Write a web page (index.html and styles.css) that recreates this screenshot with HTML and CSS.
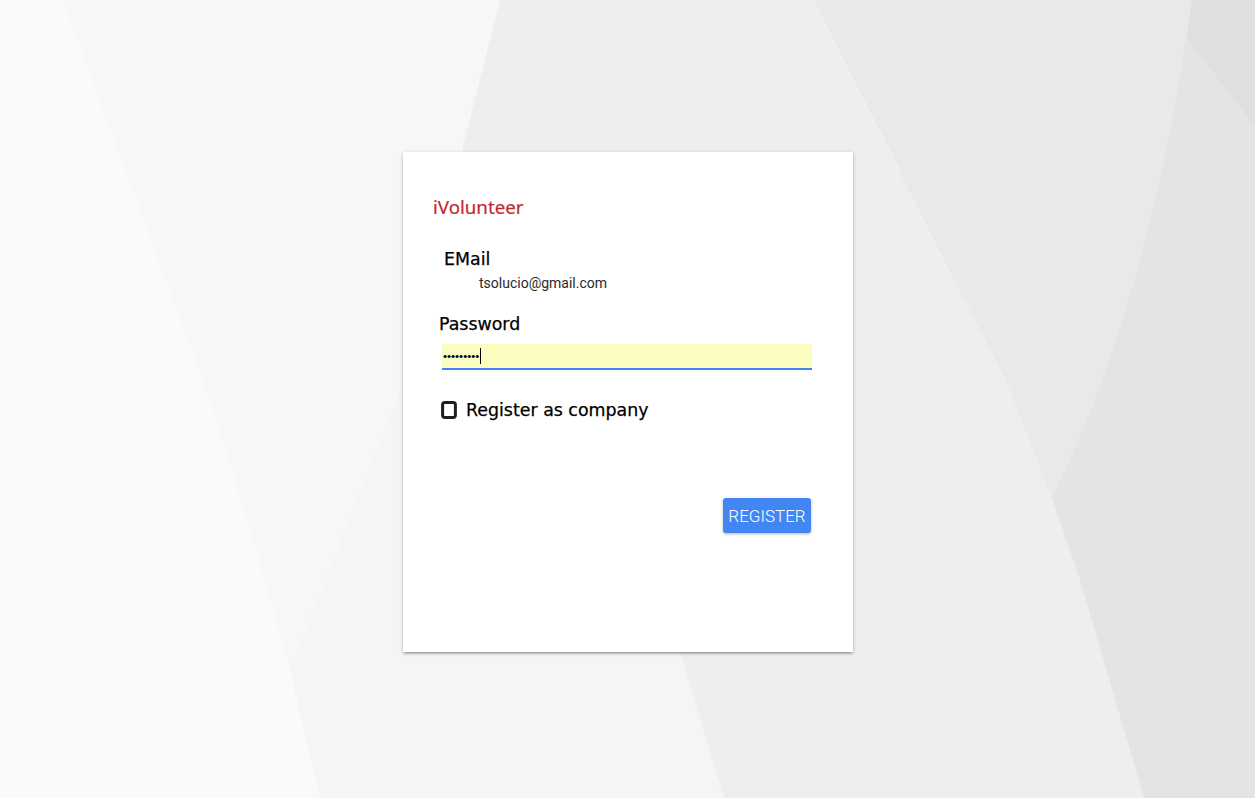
FILE: index.html
```html
<!DOCTYPE html>
<html lang="en">
<head>
<meta charset="utf-8">
<title>iVolunteer - Register</title>
<link rel="stylesheet" href="styles.css">
</head>
<body>
<svg class="backdrop" width="1255" height="798" viewBox="0 0 1255 798" preserveAspectRatio="none" aria-hidden="true">
  <rect x="0" y="0" width="1255" height="798" fill="#fafafa"/>
  <path d="M63 0 Q140 210 210 400 Q255 540 290 670 L320 798 L724 798 L680 652 Q600 420 500 0 Z" fill="#f5f5f5"/>
  <path d="M63 0 L500 0 Q470 180 403 385 L290 670 Q255 540 210 400 Q140 210 63 0 Z" fill="#f7f7f7"/>
  <rect x="900" y="0" width="355" height="798" fill="#e4e4e4"/>
  <path d="M1192 0 L1255 0 L1255 126 L1186 37 Z" fill="#dfdfdf"/>
  <path d="M800 0 L1192 0 Q1150 300 1052 498 L1006 380 L813 0 Z" fill="#e9e9e9"/>
  <path d="M500 0 L813 0 L920 212 L1006 380 L1052 498 L1080 580 L1144 798 L724 798 L680 652 Q560 380 462 150 Z" fill="#eeeeed"/>
</svg>

<main class="page">
  <section class="card">
    <h1 class="brand">iVolunteer</h1>

    <div class="field field-email">
      <div class="label">EMail</div>
      <div class="value">tsolucio@gmail.com</div>
    </div>

    <div class="field field-password">
      <div class="label">Password</div>
      <div class="input"><span class="dots">•••••••••</span><span class="caret"></span></div>
    </div>

    <label class="check-row">
      <svg class="check-icon" width="16" height="18" viewBox="0 0 16 18" aria-hidden="true">
        <rect x="1.6" y="1.6" width="12.8" height="14.8" rx="2.2" ry="2.2" fill="none" stroke="#1e1e1e" stroke-width="3"/>
      </svg>
      <span class="check-text">Register as company</span>
    </label>

    <div class="actions">
      <button class="btn" type="button">REGISTER</button>
    </div>
  </section>
</main>
</body>
</html>
```

FILE: styles.css
```css
html, body {
  margin: 0;
  padding: 0;
  width: 1255px;
  height: 798px;
  overflow: hidden;
  background: #fafafa;
}

.backdrop {
  position: absolute;
  left: 0;
  top: 0;
  z-index: 0;
}

.page {
  position: relative;
  z-index: 1;
  padding: 152px 0 0 403px;
}

.card {
  box-sizing: border-box;
  width: 450px;
  height: 500px;
  background: #ffffff;
  padding: 43px 42px 0 30px;
  box-shadow: 0 2px 2px 0 rgba(0,0,0,0.14), 0 3px 1px -2px rgba(0,0,0,0.12), 0 1px 4px 0 rgba(0,0,0,0.2);
  display: flex;
  flex-direction: column;
}

.brand {
  margin: 0;
  font-family: "Noto Sans", sans-serif;
  font-weight: 400;
  font-size: 18.72px;
  line-height: 24px;
  color: #c3292d;
  -webkit-text-stroke: 0.2px #c3292d;
}

.label {
  font-family: "DejaVu Sans", sans-serif;
  font-size: 17.4px;
  line-height: 20px;
  color: #000;
  -webkit-text-stroke: 0.25px #000;
}

.field-email {
  margin: 30px 0 0 11px;
}

.value {
  margin: 6px 0 0 35px;
  font-family: Roboto, sans-serif;
  font-size: 14px;
  line-height: 16px;
  color: #2a2a2a;
}

.field-password {
  margin: 23px 0 0 6px;
}

.input {
  box-sizing: border-box;
  margin: 10px 0 0 3px;
  width: 370px;
  height: 26px;
  background: #fafdbf;
  border-bottom: 2px solid #4285f4;
  display: flex;
  align-items: center;
  padding-left: 1px;
}

.dots {
  font-family: "Liberation Sans", sans-serif;
  font-size: 11.5px;
  line-height: 16px;
  color: #000;
  letter-spacing: 0;
}

.caret {
  display: inline-block;
  width: 1px;
  height: 16px;
  background: #000;
  margin-left: 1px;
}

.check-row {
  margin: 30px 0 0 8px;
  display: flex;
  align-items: center;
  gap: 9px;
  height: 20px;
}

.check-icon {
  display: block;
  flex: none;
}

.check-text {
  font-family: "DejaVu Sans", sans-serif;
  font-size: 17.4px;
  line-height: 20px;
  color: #000;
  -webkit-text-stroke: 0.25px #000;
}

.actions {
  display: flex;
  justify-content: flex-end;
  margin-top: 78px;
}

.btn {
  width: 88px;
  height: 35px;
  padding: 0;
  border: none;
  border-radius: 3px;
  background: #4286f4;
  color: #fff;
  font-family: Roboto, sans-serif;
  font-weight: 300;
  font-size: 17px;
  letter-spacing: 0;
  box-shadow: 0 1px 3px rgba(0,0,0,0.3);
  cursor: pointer;
}
```
